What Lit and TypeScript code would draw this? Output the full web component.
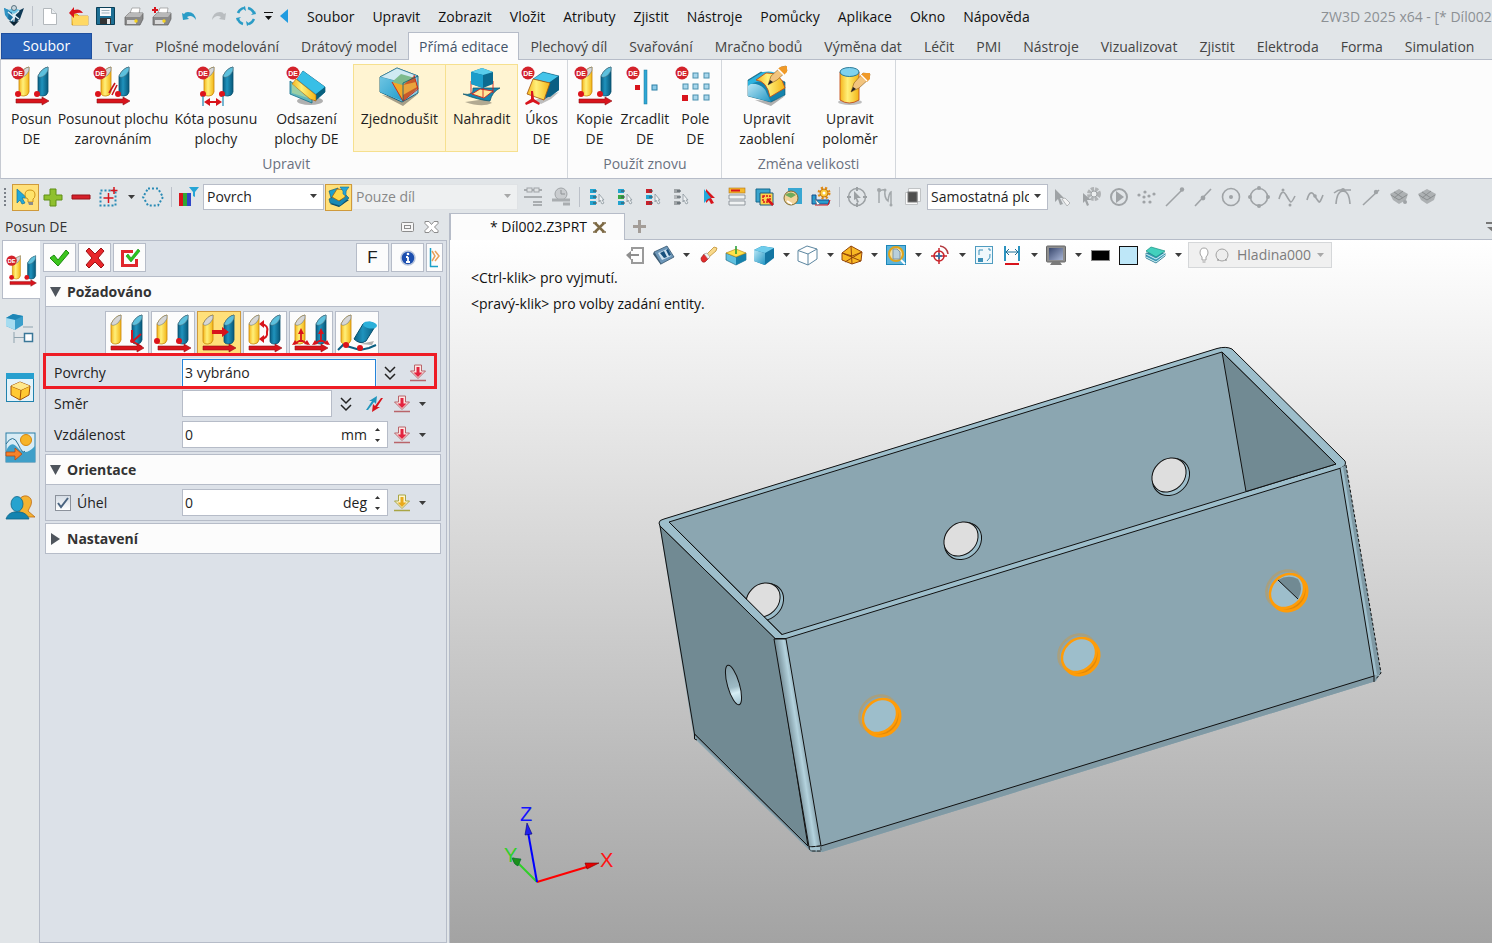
import { LitElement, html, svg, css } from "lit";
import { customElement, state } from "lit/decorators.js";
import { classMap } from "lit/directives/class-map.js";

type Frag = unknown;

const box = (w: number, h: number, body: Frag) =>
  html`<svg class="ic" width=${w} height=${h} viewBox="0 0 ${w} ${h}" aria-hidden="true">${body}</svg>`;
const i24 = (body: Frag) => box(24, 24, body);

/* ---------- shared drawing parts ---------- */

const pillar = (x: number, y: number, tone: string, cap = "") => svg`
  <g transform="translate(${x} ${y})">
    <path d="M0 9Q4 1 10 0V25Q9 29 5 29Q0 29 0 26Z" fill="url(#${tone})" stroke=${tone === "gold" ? "#c8860a" : "#07506e"} stroke-width=".8"/>
    <path d="M0 9Q4 1 10 0Q11 4 7 8Q2 12 0 9Z" fill=${cap || (tone === "gold" ? "#d6d6d6" : "#5cc0dd")} stroke="#5a6a72" stroke-width=".5"/>
  </g>`;
const baseArrow = (x: number, y: number) =>
  svg`<path d="M${x} ${y - 2}h26v-2l7 4l-7 4v-2h-26z" fill="#d8141c" stroke="#8e1015" stroke-width=".6"/>`;
const dot = (x: number, y: number, r = 3) => svg`<circle cx=${x} cy=${y} r=${r} fill="#dc141c"/>`;
const badge = (x = 7, y = 7) => svg`
  <circle cx=${x} cy=${y} r="6.500" fill="#d3222a"/>
  <text x=${x} y=${y + 3} class="de" text-anchor="middle">DE</text>`;

const posun = svg`${pillar(8, 1, "gold")}${pillar(27, 1, "blue")}${dot(7, 28)}${dot(26, 28)}${baseArrow(5, 35)}${badge()}`;

const ribbonIcons: Record<string, Frag> = {
  posun,
  zarovnani: svg`${pillar(8, 1, "gold")}${pillar(26, 1, "blue")}${dot(5, 28)}${dot(25, 28)}
    <path d="M16 27l6-10M19 29l5-10" stroke="#c4161d" stroke-width="1.600"/>${baseArrow(4, 35)}${badge()}`,
  kota: svg`${pillar(8, 1, "gold")}${pillar(27, 1, "blue")}${dot(7, 28)}${dot(26, 28)}
    <path d="M7 30v10M27 30v10" stroke="#1d87b4" stroke-width="1.200"/>
    <path d="M8 36l6-4v3h6v-3l6 4l-6 4v-3h-6v3z" fill="#d8141c"/>${badge()}`,
  odsazeni: svg`
    <ellipse cx="24" cy="35" rx="13" ry="4" fill="#000" opacity=".3"/>
    <path d="M4 15L26 31V37L4 28Z" fill="#63b6bb" stroke="#0d6d8c" stroke-width=".8"/>
    <path d="M17 5L39 21V26L29 35L26 31L10 15Z" fill="#1c9cc7" stroke="#07506e" stroke-width=".7"/>
    <path d="M17 5L39 21L30 28L11 13Z" fill="#38bfe6"/>
    <path d="M30 28L39 21V26L30 34Z" fill="#08617f"/>
    <path d="M10 13L30 29V35L24 33L6 18Z" fill="url(#gold)" stroke="#b3600a" stroke-width=".6"/>
    <path d="M6 18v9l16 5z" fill="#a9d6a0" opacity=".8"/>${badge(7, 7)}`,
  zjednodusit: svg`
    <path d="M3 29L24 40L39 28L24 33Z" fill="#000" opacity=".35"/>
    <path d="M1 11L18 2L39 10V27L23 36L1 26Z" fill="#8ecbe0" stroke="#0d5a78" stroke-width=".9"/>
    <path d="M1 11L18 2L39 10L24 17Z" fill="#cfeaf3" stroke="#1d6f8e" stroke-width=".6"/>
    <path d="M1 11L24 17V35L1 26Z" fill="#23a3d0"/>
    <path d="M1 11L24 17V35L1 26Z" fill="url(#ice)" opacity=".5"/>
    <path d="M13 16L22 8L36 12L24 19Z" fill="#7dbb8d"/>
    <path d="M13 16L24 19V35Z" fill="#f2a928"/>
    <path d="M24 19L35 10L39 22L24 35Z" fill="#c85a2a"/>
    <path d="M24 19L37 16L38 21L24 29Z" fill="#e9a33c"/>
    <path d="M13 16L24 35L39 23L35 9" fill="none" stroke="#cc2b1d" stroke-width="1"/>
    <path d="M24 17V35M24 17L39 10" stroke="#0d5a78" stroke-width=".8"/>`,
  nahradit: svg`
    <path d="M3 36Q20 42 30 37L24 33Z" fill="#000" opacity=".3"/>
    <path d="M1 28Q12 30 11 22H28L38 22Q30 26 28 35Q16 34 1 28Z" fill="#1685ad" stroke="#075067" stroke-width=".7"/>
    <path d="M10 28L18 23L31 25L22 32Z" fill="#ffe79a" stroke="#d0211c" stroke-width=".9"/>
    <path d="M9 15V28M31 15V27M21 18V31" stroke="#d0211c" stroke-width=".9"/>
    <path d="M9 6L20 2L31 6V18L21 22L9 18Z" fill="#0b6b90"/>
    <path d="M9 6L20 2L31 6L21 9Z" fill="#58cdec"/>
    <path d="M9 6L21 9V22L9 18Z" fill="#1a9dca"/>`,
  ukos: svg`
    <path d="M14 34L38 26L30 33L20 38Z" fill="#000" opacity=".25"/>
    <path d="M12 14L22 6L38 10V24L29 31L14 30Z" fill="#0d6d94"/>
    <path d="M12 13L22 6L38 10L28 17Z" fill="#43c4ea" stroke="#07506e" stroke-width=".5"/>
    <path d="M28 17L38 10V24L24 33Z" fill="#0b5f83"/>
    <path d="M12 13L29 17L23 34L6 28Z" fill="url(#gold)" stroke="#a2520b" stroke-width=".8"/>
    <path d="M10 25h2l1 8l6 4l-1 2l-6-3l-7 3l-1-2l6-4z" fill="#d8141c"/>${badge(7, 7)}`,
  zrcadlit: svg`
    <rect x="19" y="4" width="3" height="34" fill="#2fa7d4" stroke="#17779c" stroke-width=".5"/>
    <rect x="10" y="19" width="5" height="5" fill="#d8141c"/>
    <rect x="27" y="19" width="5" height="5" fill="#8ccbe8" stroke="#2a7fa5"/>${badge(8, 7)}`,
  pole: svg`
    ${[18, 29].map((x) => svg`<rect x=${x} y="7" width="5" height="5" fill="#a9d7ec" stroke="#4a8fae"/>`)}
    ${[8, 18, 29].map((x) => svg`<rect x=${x} y="18" width="5" height="5" fill="#a9d7ec" stroke="#4a8fae"/>`)}
    <rect x="7" y="29" width="6" height="6" fill="#d8141c"/>
    ${[18, 29].map((x) => svg`<rect x=${x} y="29" width="5" height="5" fill="#a9d7ec" stroke="#4a8fae"/>`)}${badge(7, 7)}`,
  zaobleni: svg`
    <path d="M8 34L24 40L38 30L24 35Z" fill="#000" opacity=".3"/>
    <path d="M1 14L14 6L38 16V29L24 36L1 30Z" fill="#1583ad" stroke="#075067" stroke-width=".6"/>
    <path d="M1 18Q16 16 20 28L24 36L1 30Z" fill="url(#ice)"/>
    <path d="M1 15L16 6Q26 4 32 9L20 16Q8 14 1 20Z" fill="#2db3de"/>
    <path d="M9 14L19 7Q34 6 38 22L23 31Q20 15 9 14Z" fill="url(#gold)" stroke="#c4501a" stroke-width=".9"/>
    <path d="M21 19L24 10L34 1L39 0L40 5L30 14Z" fill="#f2c47e" stroke="#8a5a1b" stroke-width=".6"/>
    <path d="M33 1L40 0V6L37 9L31 3Z" fill="#f09a28"/>
    <path d="M21 19L23 14L26 16Z" fill="#222"/><path d="M31 3L37 9" stroke="#fff" stroke-width="1.500"/>`,
  polomer: svg`
    <ellipse cx="20" cy="36" rx="12" ry="3" fill="#000" opacity=".25"/>
    <path d="M10 6V34Q19 40 29 34V6Z" fill="url(#gold)" stroke="#c4501a" stroke-width=".9"/>
    <ellipse cx="19.500" cy="6" rx="9.500" ry="4.500" fill="#7fd2ee" stroke="#1d6f8e" stroke-width=".9"/>
    <path d="M21 26L24 17L33 7L40 8L39 13L29 22Z" fill="#f2c47e" stroke="#8a5a1b" stroke-width=".6"/>
    <path d="M33 7L40 7V13L37 16L30 10Z" fill="#f09a28"/>
    <path d="M21 26L23 21L26 23Z" fill="#222"/><path d="M31 9L37 15" stroke="#fff" stroke-width="1.500"/>`,
};
ribbonIcons.kopie = posun;

const modeIcons: Frag[] = [
  svg`${pillar(5, 3, "gold")}${pillar(26, 3, "blue")}<path d="M26 18v12M26 30l9-8M26 29l10 6" fill="none" stroke="#d8141c" stroke-width="2"/>${dot(26, 29, 2)}${baseArrow(5, 36)}`,
  svg`${pillar(5, 3, "gold")}${pillar(26, 3, "blue")}${dot(5, 29)}${dot(27, 29)}${baseArrow(6, 36)}`,
  svg`${pillar(5, 3, "gold")}${pillar(26, 3, "blue")}<path d="M14 18h10v-3l7 5l-7 5v-3h-10z" fill="#d8141c"/>${baseArrow(5, 36)}`,
  svg`${pillar(5, 3, "gold")}${pillar(26, 3, "blue")}<path d="M17 12Q25 13 23 20Q24 26 17 27" fill="none" stroke="#d8141c" stroke-width="2"/><path d="M15 12l5-4v8zM15 27l5-4v8z" fill="#d8141c"/>${baseArrow(5, 36)}`,
  svg`${pillar(5, 3, "gold")}${pillar(26, 3, "blue")}
    <path d="M11 20v8l-7 4M11 28l7 4M31 20v8l-7 4M31 28l7 4" fill="none" stroke="#d8141c" stroke-width="1.800"/>
    <path d="M11 16l3 6h-6zM31 16l3 6h-6zM2 33l3-5l3 4zM20 33l-3-5l-3 4zM22 33l3-5l3 4zM40 33l-3-5l-3 4z" fill="#d8141c"/>${baseArrow(5, 36)}`,
  svg`${pillar(5, 3, "gold")}<path d="M24 32l12 1l2-4z" fill="#000" opacity=".3"/>
    <path d="M18 27L27 12Q34 8 40 13L30 29Q24 33 18 27Z" fill="url(#blue)" stroke="#07506e"/><ellipse cx="34" cy="13" rx="7" ry="3.500" fill="#2bb0da" transform="rotate(8 34 13)"/>
    <path d="M2 38L7 33L24 38L33 36L40 33" fill="none" stroke="#0b5f83" stroke-width="2"/>${dot(10, 33)}${dot(24, 36)}`,
];

/* ---------- quick access ---------- */

const printer = svg`
  <path d="M8 9L10 4h8l-1 6z" fill="#fff" stroke="#8f8f8f" stroke-width=".7"/>
  <path d="M3 13l4-4h14v6l-3 6H3z" fill="#8a8a8a" stroke="#5a5a5a" stroke-width=".7"/>
  <path d="M3 13l4-4h14l-3 4z" fill="#b9b9b9"/><path d="M5 16h9v4H5z" fill="#dadada"/><circle cx="14" cy="17" r="1.700" fill="#f6d21c"/>`;

const quickIcons: [string, Frag][] = [
  ["Nový", svg`<path d="M5.500 4.500h8l5 5V20.500H5.500z" fill="#fff" stroke="#b3b8bc"/><path d="M13.500 4.500v5h5" fill="#e9edf0" stroke="#b3b8bc"/>`],
  ["Otevřít", svg`<path d="M6 10h5l2 2h9v9H6z" fill="#f3bd31" stroke="#c98d0e" stroke-width=".7"/><path d="M6 12h16v9H7z" fill="#ffd964"/><path d="M3 9l5-6v3q6-2 9 3q-5-1-9 1v4z" fill="#d8141c"/>`],
  ["Uložit", svg`<path d="M2.500 3.500h18v17h-18z" fill="#1d6f94" stroke="#0b3f57"/><rect x="6" y="4" width="11" height="8" fill="#f6f8fa"/><path d="M7.500 6.500h8M7.500 9h8" stroke="#9fb1bb"/><rect x="6" y="14" width="11" height="6" fill="#333"/><rect x="13" y="15" width="3" height="5" fill="#e6e6e6"/>`],
  ["Tisk", printer],
  ["Náhled tisku", svg`${printer}<path d="M5 3v6M2 6h6" stroke="#d8141c" stroke-width="2"/>`],
  ["Zpět", svg`<path d="M4 9l1 7l6-1l-2-2q5-3 9 3q-1-8-8-8q-3 0-4 2z" fill="#2a9cc6"/>`],
  ["Znovu", svg`<path d="M20 9l-1 7l-6-1l2-2q-5-3-9 3q1-8 8-8q3 0 4 2z" fill="#b9bdc0"/>`],
  ["Obnovit", svg`<g fill="none" stroke="#2a9cc6" stroke-width="2.500"><path d="M14 4q4 1 6 5M20 15q-2 4-5 5M9 20q-4-1-5-5M4 9q1-3 5-5"/></g><g fill="#2a9cc6"><path d="M11 2l1 5l-4-3zM22 10l-5 1l4-4zM13 22l-1-5l4 3zM2 14l5-1l-4 4z"/></g>`],
];
const logo = svg`
  <path d="M2 4l8 4l2 12l-6-5z" fill="#1c6f9c"/><path d="M22 4l-8 4l-2 12l6-5z" fill="#0f3a56"/>
  <path d="M6 6l6-2l6 2l-6 4z" fill="#6cc6e6"/><path d="M2 4l5 2l-1 9l-3-4z" fill="#2f93c4"/>
  <path d="M6 8l5 4l6-5M9 17l4-5l4 3" fill="none" stroke="#dff1f8" stroke-width="1.500"/>
  <circle cx="12" cy="4" r="2.500" fill="#c9d8df" stroke="#294656" stroke-width=".7"/><path d="M7 17l5 5l5-5l-5 1z" fill="#0b2534"/>`;

/* ---------- selection toolbar ---------- */

const listPick = (c: string, a: string) => svg`
  <rect x="5" y="4" width="6" height="4" fill=${c}/><rect x="5" y="10" width="6" height="4" fill=${a}/><rect x="5" y="16" width="6" height="4" fill=${c}/>
  <path d="M8 6h4M8 12h4M8 18h4" stroke="#3f4b52" stroke-width="1"/>
  <path d="M14 9l5 6h-2l2 3l-2 1l-2-4l-1 2z" fill="#eef1f3" stroke="#8d989e" stroke-width=".8"/>`;
const greyBar = svg`<path d="M3 5h18M3 12h18M12 17h9M12 20h9" stroke="#a9adb0" stroke-width="2"/><rect x="6" y="3" width="5" height="4" fill="#dfe2e4" stroke="#a0a4a7"/><rect x="13" y="3" width="5" height="4" fill="#dfe2e4" stroke="#a0a4a7"/>`;

const T: Record<string, Frag> = {
  pick: svg`<path d="M3 4l10 9h-5l3 5l-3 1l-2-4l-3 3z" fill="#22a9da" stroke="#12749b" stroke-width=".7"/><path d="M16 5q5 0 5 5q0 3-2 4v3h-5v-3q-3-1-3-4q0-5 5-5z" fill="#ffe36a" stroke="#c98d0e" stroke-width=".9"/><path d="M14 17h5v3h-4z" fill="#8b8b8b"/>`,
  plus: svg`<path d="M9 4h6v6h6v5h-6v6H9v-6H3v-5h6z" fill="#8fc02e" stroke="#5f8f17"/>`,
  minus: svg`<path d="M3 10h18v4H3z" fill="#d6202a" stroke="#981219"/>`,
  frame: svg`<path d="M3.500 5.500h15v15h-15z" fill="none" stroke="#2a8bb5" stroke-width="2" stroke-dasharray="2 2"/><path d="M11.500 8v10M6.500 13h10M17 2v7M13.500 5.500h7" stroke="#d8141c" stroke-width="1.500"/>`,
  hex: svg`<path d="M7 3.500h10l5 8.500l-5 8.500H7L2 12z" fill="none" stroke="#2a8bb5" stroke-width="2" stroke-dasharray="2 2"/>`,
  filter: svg`<rect x="2" y="8" width="4" height="13" fill="#d8141c"/><rect x="6" y="8" width="4" height="13" fill="#30a833"/><rect x="10" y="8" width="4" height="13" fill="#3046c8"/><path d="M12 2h10l-4 5v5l-2-1V7z" fill="#26a5d6"/>`,
  face: svg`<path d="M3 19l9 3l10-7l-8-2z" fill="#0c4a64"/>
    <path d="M2 6l9-3v5l-7 5z" fill="#1f9fcb" stroke="#0c5675" stroke-width=".6"/>
    <path d="M2 14l4-2l7 4l6-6l3 3l-9 8l-10-3z" fill="#1a8ab4" stroke="#0c5675" stroke-width=".6"/>
    <path d="M5 12l5-8l9 1l-1 7l-6 4z" fill="#ffd84a" stroke="#a2620b" stroke-width=".8"/>
    <path d="M13 2h9l-3 4v5l-3-2V6z" fill="#26a5d6" stroke="#11749c" stroke-width=".6"/>`,
  ref1: greyBar,
  ref2: svg`<circle cx="12" cy="9" r="6" fill="#c9cccf" stroke="#a0a4a7"/><path d="M12 9V5M12 9h4" stroke="#8f9396"/><path d="M3 15h18M14 19h7" stroke="#a9adb0" stroke-width="3"/>`,
  l1: listPick("#22a3cf", "#22a3cf"), l2: listPick("#22a3cf", "#39a845"), l3: listPick("#c8202a", "#22a3cf"), l4: listPick("#9ea3a6", "#b4b8bb"),
  arrow2: svg`<path d="M9 4l9 9h-4l3 5l-3 1l-2-4l-3 3z" fill="#d8141c"/><path d="M7 4l7 9l-3 1l-4 4z" fill="#22a9da"/>`,
  rows: svg`<path d="M4 10h16v4H4zM4 16h16v4H4z" fill="#f1f3f4" stroke="#7d878d" stroke-width=".8"/><rect x="4" y="3" width="16" height="5" fill="#f5b82a" stroke="#b0741b" stroke-width=".6"/><path d="M6 5.500h9" stroke="#d8141c" stroke-width="2"/>`,
  layers: svg`<path d="M3 4h14v13H3z" fill="#3aa4cd" stroke="#14688d"/><path d="M7 8h13v12H7z" fill="#fbd34c" stroke="#1a5f80"/><path d="M10 11h7v6h-7z" fill="none" stroke="#d8141c" stroke-width="1.500" stroke-dasharray="2 1"/><path d="M14 14l6 6" stroke="#d8141c" stroke-width="2.500"/>`,
  globe: svg`<path d="M7 3h14v16H7z" fill="#38a7d2"/><circle cx="10" cy="13" r="7" fill="#f2d39a" stroke="#7e6a2d"/><path d="M4 10q6-5 11 0l-5 3z" fill="#6fab5a"/><path d="M6 16l5 3" stroke="#fff" stroke-width="2"/>`,
  plate: svg`<circle cx="15" cy="8" r="5" fill="none" stroke="#e08a14" stroke-width="3" stroke-dasharray="2 2"/><circle cx="15" cy="8" r="4" fill="#fbcb3a" stroke="#c97812"/><circle cx="15" cy="8" r="1.500" fill="#fff"/><path d="M3 10h4v5h13v4H3z" fill="#2a9ccd" stroke="#164f8c"/><path d="M6 20h13l2-5" fill="none" stroke="#d8141c" stroke-width="1"/><path d="M6 14l5 5l-3 1z" fill="#fff" stroke="#567" stroke-width=".6"/>`,
  target: svg`<circle cx="12" cy="12" r="8.500" fill="none" stroke="#9ba0a3" stroke-width="1.500"/><path d="M12 2v4M12 18v4M2 12h4M18 12h4" stroke="#9ba0a3" stroke-width="2"/><path d="M9 6l7 7h-4l2 4l-2 1l-1-4l-2 1z" fill="#9ba0a3"/>`,
  links: svg`<path d="M6 18V7q2-3 6-2Q11 13 15 16Q16 8 18 7v12" fill="none" stroke="#a3a8ab" stroke-width="1.500"/><circle cx="6" cy="5" r="2" fill="#a3a8ab"/><circle cx="12" cy="5" r="1.500" fill="#a3a8ab"/><circle cx="18" cy="20" r="1.500" fill="#a3a8ab"/>`,
  square: svg`<path d="M7.500 3.500h12v13h-12zM4.500 7.500h12v12h-12z" fill="#fafafa" stroke="#c0c3c5"/><rect x="7" y="7" width="9" height="10" fill="#4e4e4e" stroke="#777"/>`,
};
const g = "#9fa3a6";
const grey: Frag[] = [
  svg`<path d="M4 4l9 9h-4l3 6l-3 1l-2-6l-3 3z" fill=${g}/><path d="M11 14l3-1l5 5l-3 3z" fill="#f3f3f3" stroke="#b5b8ba"/>`,
  svg`<circle cx="15" cy="9" r="5" fill="none" stroke="#b0b3b5" stroke-width="4" stroke-dasharray="3 1"/><circle cx="15" cy="9" r="3" fill="#eceeef" stroke=${g}/><path d="M4 8l8 7h-4l2 5l-2 1l-2-5l-2 2z" fill=${g}/>`,
  svg`<circle cx="12" cy="12" r="8" fill="none" stroke=${g} stroke-width="2"/><path d="M9 6l8 6l-8 6z" fill=${g}/>`,
  svg`${[[4, 10], [10, 7], [19, 9], [14, 11], [9, 12], [9, 17], [15, 17]].map(([x, y]) => svg`<circle cx=${x} cy=${y} r="1.600" fill=${g}/>`)}`,
  svg`<path d="M3 21L19 5" stroke=${g} stroke-width="1.600"/><circle cx="19" cy="4.500" r="2.200" fill=${g}/>`,
  svg`<path d="M4 21L20 4" stroke=${g} stroke-width="1.600"/><circle cx="12" cy="13" r="2.400" fill=${g}/>`,
  svg`<circle cx="12" cy="12" r="8.500" fill="none" stroke=${g} stroke-width="1.600"/><circle cx="12" cy="12" r="2" fill=${g}/>`,
  svg`<circle cx="12" cy="12" r="8.500" fill="none" stroke=${g} stroke-width="1.600"/>${[[12, 3], [12, 21], [3, 12], [21, 12]].map(([x, y]) => svg`<circle cx=${x} cy=${y} r="2" fill=${g}/>`)}`,
  svg`<path d="M4 14Q7 3 11 10T16 17T20 11" fill="none" stroke=${g} stroke-width="1.600"/><circle cx="8" cy="5" r="1.500" fill=${g}/><circle cx="15" cy="20" r="1.500" fill=${g}/>`,
  svg`<path d="M4 15Q7 4 11 10T16 17T20 10" fill="none" stroke=${g} stroke-width="1.600"/><circle cx="12" cy="11" r="1.800" fill=${g}/>`,
  svg`<path d="M3 8Q8 4 12 5H20M5 19Q6 6 12 6T19 19" fill="none" stroke=${g} stroke-width="1.600"/><circle cx="12" cy="5" r="2" fill=${g}/>`,
  svg`<path d="M4 20L20 5" stroke=${g} stroke-width="1.600"/><circle cx="17" cy="7" r="2.200" fill=${g}/>`,
  svg`<path d="M3 9l9-5l9 5l-2 6l-7 4l-6-4z" fill="#adb1b3"/><path d="M4 10l8 5l8-5M7 7l9 6M16 6l-9 7" stroke="#8b8f91" fill="none"/><circle cx="18" cy="17" r="2" fill=${g}/>`,
  svg`<path d="M3 9l9-5l9 5l-2 6l-7 4l-6-4z" fill="#adb1b3"/><path d="M4 10l8 5l8-5M7 7l9 6M16 6l-9 7" stroke="#8b8f91" fill="none"/>`,
];

/* ---------- view toolbar ---------- */

const V: Record<string, Frag> = {
  exit: svg`<path d="M8 8V5h11v15H8v-4" fill="none" stroke="#9a9a9a" stroke-width="2"/><path d="M2 12l5-4v3h8v2H7v4z" fill="#8e8e8e"/>`,
  view: svg`<path d="M2 9l13-6l7 11l-13 7z" fill="#6c96b8" stroke="#35566f" stroke-width=".8"/><path d="M2 9l-1 2l8 11v-1z" fill="#35566f"/><path d="M6 10l9-4l4 7l-9 4z" fill="#cfe3f1"/><path d="M8 10l4-2l3 6l-3 1zM14 7l2-1l3 6l-2 1z" fill="#17507c"/>`,
  eraser: svg`<path d="M11 11L18 4l3 1l-1 3l-7 6z" fill="#f8d98b" stroke="#b88420" stroke-width=".7"/><path d="M5 15l3-4l5 4l-4 4q-4 1-4-4z" fill="#e22b2b" stroke="#8c1818" stroke-width=".6"/><path d="M8 11l3-1l3 4l-2 2z" fill="#f3f3f3" stroke="#888" stroke-width=".5"/>`,
  datum: svg`<path d="M2 10l10 4l10-4v7l-10 5l-10-5z" fill="#5fc0df" stroke="#0d5a78" stroke-width=".6"/><path d="M12 14l10-4v7l-10 5z" fill="#1681ab"/><path d="M2 10l10-4l10 4l-10 4z" fill="#ffe14a" stroke="#b27c0b" stroke-width=".6"/><path d="M12 3v8" stroke="#1e9b33" stroke-width="1.500"/>`,
  shade: svg`<path d="M2 7l8-4l12 2v10l-9 7l-11-4z" fill="#1376a3"/><path d="M2 7l8-4l12 2l-9 5z" fill="#6fcdec"/><path d="M2 7l11 3v12l-11-4z" fill="url(#ice)"/>`,
  wire: svg`<path d="M2 7.500l9-4.500l10 3v10l-9 6l-10-4zM2 7.500l10 3.500l9-5M12 11v11" fill="#fff" stroke="#5c86a0" stroke-width="1"/>`,
  mesh: svg`<path d="M2 10l9-7l11 6l-1 9l-9 3l-10-4z" fill="#f9b824" stroke="#93460c"/><path d="M2 10l19 8M11 3l1 18M22 9L5 19M2 10l10 3l10-4" stroke="#93460c" fill="none"/>`,
  zoomdoc: svg`<rect x="2.500" y="2.500" width="19" height="19" fill="#5db4dc" stroke="#1c86b8"/><circle cx="12" cy="11" r="7" fill="#f3dfa0" stroke="#e0a41c" stroke-width="2"/><path d="M9 6h4l3 3v7H9z" fill="#b9cfdb" stroke="#7f95a3"/><path d="M17 17l4 4" stroke="#fff" stroke-width="2"/>`,
  cross: svg`<circle cx="11" cy="13" r="5" fill="none" stroke="#c9252c" stroke-width="1.500"/><path d="M11 5v16M3 13h16" stroke="#c9252c" stroke-width="1.500"/><path d="M11 10v6M8 13h6" stroke="#2276b0" stroke-width="1.500"/><path d="M12 3q7 1 8 8" fill="none" stroke="#b33a3f" stroke-width="1.500"/>`,
  fit: svg`<rect x="3.500" y="3.500" width="17" height="17" fill="#f0f8fc" stroke="#4f9cc0"/><path d="M6 15h5v4H6z" fill="#3c8fb7"/><path d="M16 6h2v2M15 18q4-3 3-7M7 12V7h4" fill="none" stroke="#3c8fb7"/>`,
  dim: svg`<path d="M5 3v15M19 3v15" stroke="#2c93c0" stroke-width="2"/><path d="M6 9h12M6 9l3-3M6 9l3 3M18 9l-3-3M18 9l-3 3" stroke="#1b6e96" fill="none"/><path d="M5 21h14" stroke="#d8141c" stroke-width="2"/>`,
  monitor: svg`<rect x="2.500" y="3" width="19" height="16" rx="1" fill="#8e8e8e" stroke="#666"/><rect x="5" y="5" width="14" height="12" fill="url(#screen)"/><path d="M8 19h8l2 3H6z" fill="#7b7b7b"/>`,
  black: svg`<rect x="3.500" y="7.500" width="18" height="10" fill="#000" stroke="#888"/>`,
  lightblue: svg`<rect x="3.500" y="3.500" width="18" height="18" fill="#bee7f8" stroke="#111"/>`,
  stack: svg`<path d="M2 15l10 5l9-7v-3H2z" fill="#3a99b5" stroke="#1d6a82" stroke-width=".7"/><path d="M2 11l10 5l9-6M2 14l10 5l9-7" stroke="#d7f2f5" fill="none"/><path d="M2 8l5-4l14 4l-9 6z" fill="#43d0bd" stroke="#178f80" stroke-width=".7"/>`,
};

const caret = svg`<path d="M0 0h7l-3.500 4z" fill="#3c3c3c"/>`;
const chevrons = svg`<path d="M1 1l5 5l5-5M1 8l5 5l5-5" fill="none" stroke="#222" stroke-width="1.500"/>`;
const download = (c: string, d: string, f: string) => svg`
  <path d="M5.500 1h7v6h4l-7.500 7.500L1.500 7h4z" fill=${f} stroke=${c}/><path d="M7.500 3h3v5.500h3l-4.500 4.500l-4.500-4.500h3z" fill=${d}/><path d="M1 16.500h16" stroke=${c} stroke-width="1.500"/>`;
const redDown = download("#b9646a", "#e3233f", "#fbe6e3");
const goldDown = download("#a9a545", "#e8aa1c", "#fdf6cf");

const sideIcons: [string, Frag][] = [
  ["Posun DE", svg`<g transform="translate(0 2) scale(.8)">${posun}</g>`],
  ["Správce historie", svg`<path d="M1 6l7-4l10 2v9l-8 5l-9-4z" fill="#3a9fcb"/><path d="M1 6l7-4l10 2l-8 4z" fill="#1e86b6"/><path d="M1 6l9 2v10l-9-4z" fill="#a5dcf0"/><path d="M18 15h10M9 20v11M9 25.500h10" stroke="#8fa3ae"/><rect x="19.500" y="21.500" width="8" height="8" fill="#fff" stroke="#3a7798" stroke-width="1.500"/>`],
  ["Správce zobrazení", svg`<rect x="1.500" y="2.500" width="27" height="28" fill="#e4f3fa" stroke="#2182ad"/><rect x="1" y="2" width="28" height="6" fill="#28a0cf"/><path d="M6 15l9-4l10 4l-1 9l-9 5l-9-5z" fill="#ffc933" stroke="#a2520b"/><path d="M6 15l10 4l9-4M16 19l-1 10" fill="none" stroke="#a2520b"/><path d="M6 15l9-4l10 4l-9 4z" fill="#ffe88c"/>`],
  ["Vizuální správce", svg`<rect x="1" y="3" width="29" height="29" fill="#d8ecf5" stroke="#2b7ea6"/><path d="M1 21Q6 9 13 18T30 16V32H1Z" fill="#3f9fc8"/><path d="M1 14Q8 3 13 14T20 21" fill="none" stroke="#276f93"/><circle cx="21" cy="10" r="5.500" fill="#f6b428" stroke="#d5860e"/><path d="M1 22h9v-4l7 6l-7 6v-4H1z" fill="#f5822a" stroke="#b2440c" stroke-width=".7"/>`],
  ["Správce rolí", svg`<path d="M14 12q2-6 8-5q6 2 4 9q-2 4-3 6l7 6H14z" fill="#f4b331" stroke="#bf6a10" stroke-width=".8"/><ellipse cx="12" cy="15" rx="6" ry="7.500" fill="#26a3cf" stroke="#0d6488" stroke-width=".8"/><path d="M1 30q2-6 8-7h6q7 1 9 7z" fill="#1484b0" stroke="#0d6488" stroke-width=".8"/>`],
];

const menuItems = ["Soubor", "Upravit", "Zobrazit", "Vložit", "Atributy", "Zjistit", "Nástroje", "Pomůcky", "Aplikace", "Okno", "Nápověda"];
const tabs = ["Tvar", "Plošné modelování", "Drátový model", "Přímá editace", "Plechový díl", "Svařování", "Mračno bodů", "Výměna dat", "Léčit", "PMI", "Nástroje", "Vizualizovat", "Zjistit", "Elektroda", "Forma", "Simulation"];

interface Cmd { icon: string; lines: string[]; size?: string; hot?: boolean }
const groups: { label: string; cmds: Cmd[] }[] = [
  { label: "Upravit", cmds: [
    { icon: "posun", lines: ["Posun", "DE"] },
    { icon: "zarovnani", lines: ["Posunout plochu", "zarovnáním"] },
    { icon: "kota", lines: ["Kóta posunu", "plochy"] },
    { icon: "odsazeni", lines: ["Odsazení", "plochy DE"], size: "wide" },
    { icon: "zjednodusit", lines: ["Zjednodušit"], size: "mid", hot: true },
    { icon: "nahradit", lines: ["Nahradit"], size: "mid", hot: true },
    { icon: "ukos", lines: ["Úkos", "DE"] },
  ] },
  { label: "Použít znovu", cmds: [
    { icon: "kopie", lines: ["Kopie", "DE"] },
    { icon: "zrcadlit", lines: ["Zrcadlit", "DE"] },
    { icon: "pole", lines: ["Pole", "DE"] },
  ] },
  { label: "Změna velikosti", cmds: [
    { icon: "zaobleni", lines: ["Upravit", "zaoblení"], size: "wide" },
    { icon: "polomer", lines: ["Upravit", "poloměr"], size: "wide" },
  ] },
];

@customElement("app-root")
export class AppRoot extends LitElement {
  @state() private mode = 2;
  @state() private angle = true;

  static styles = css`
    :host { display: flex; flex-direction: column; height: 100vh; min-width: 0; overflow: hidden;
      background: #e1e5e8; color: #1e1e1e; font: 14px/20px "Open Sans", "Noto Sans", sans-serif; }
    * { box-sizing: border-box; }
    button, input, select { font: inherit; color: inherit; margin: 0; padding: 0; border: 0; background: none; border-radius: 0; }
    a { color: inherit; text-decoration: none; }
    h2, h3, p { margin: 0; font: inherit; }
    .ic { display: block; flex: none; overflow: visible; }
    .defs { position: absolute; width: 0; height: 0; }
    .de { font: bold 7px "Liberation Sans", sans-serif; fill: #fff; }
    .cell { flex: none; width: 28px; height: 28px; display: grid; place-items: center; }
    .drop { flex: none; width: 16px; height: 28px; display: grid; place-items: center; }
    .sep { flex: none; width: 8px; height: 20px; display: grid; justify-items: center; }
    .sep::before { content: ""; width: 1px; height: 100%; background: #bcc1c9; }

    .titlebar { display: flex; align-items: center; height: 32px; flex: none; }
    .logo { width: 28px; height: 28px; display: grid; place-items: center; }
    .menu { display: flex; gap: 18px; padding: 2px 0 0 15px; white-space: nowrap; color: #111; }
    .apptitle { margin-left: auto; flex: none; width: 171px; white-space: nowrap; color: #8c9094; padding-top: 2px; }

    .tabs { display: flex; height: 28px; flex: none; border-bottom: 1px solid #b6bcc8; padding: 1px 0 0 1px; color: #444; }
    .tab { height: 26px; padding: 1px 11px 0; white-space: nowrap; flex: none; }
    .tab.file { width: 91px; margin-right: 2px; padding: 0; background: #2962b8; border: 1px solid #1f4f9e; color: #fff; }
    .tab.on { height: 28px; margin: -1px 0 0; padding-inline: 10px; border: 1px solid #b6bcc8; border-bottom: 0; background: #fcfcfc; color: #44546a; }

    .ribbon { display: flex; height: 119px; flex: none; background: #fcfcfc; border-bottom: 1px solid #b6bcc8; border-left: 1px solid #c6cad2; }
    .group { display: flex; flex-direction: column; padding: 4px 3px 0; border-right: 1px solid #d3d7dc; }
    .group:first-child { padding-left: 7px; }
    .cmds { display: flex; height: 88px; }
    .cmd { display: flex; flex-direction: column; align-items: center; gap: 3px; min-width: 46px; padding: 1px 2px 0; border: 1px solid transparent; line-height: 20px; white-space: nowrap; }
    .cmd.mid { padding-inline: 7px; }
    .cmd.wide { padding-inline: 13px; }
    .cmd.hot { background: #fff4d2; border-color: #f6e08f; }
    .cmd.hot + .hot { border-left: 0; }
    .caption { text-align: center; color: #6a7180; line-height: 20px; padding-top: 2px; }

    .tools { display: flex; align-items: center; height: 34px; flex: none; padding-top: 2px; }
    .grip { width: 12px; height: 20px; flex: none; background: radial-gradient(circle, #7a8088 1px, transparent 1px) 3px 0 / 4px 4px repeat-y; }
    .lit { width: 27px; height: 27px; flex: none; display: grid; place-items: center; background: #ffe07a; border: 1px solid #cf9a3c; }
    .combo { position: relative; flex: none; width: 121px; height: 26px; margin-right: 1px; }
    .combo select { appearance: none; width: 100%; height: 26px; padding: 0 24px 0 3px; background: #fff; border: 1px solid #b8bdc8; }
    .combo.narrow select { padding-right: 18px; }
    .combo svg { position: absolute; right: 7px; top: 10px; pointer-events: none; }
    .combo.off { width: 166px; }
    .combo.off select { background: #eef0f1; border-color: #dfe2e5; color: #888; opacity: 1; }
    .combo.off svg, .layer .ic.c { opacity: .4; }

    .main { flex: 1; min-height: 0; display: grid; grid-template-columns: 450px minmax(0, 1fr); }
    .left { display: flex; flex-direction: column; min-height: 0; border-right: 1px solid #b6bcc8; }
    .lefthead { display: flex; align-items: center; height: 27px; padding: 0 6px 0 5px; color: #333; flex: none; }
    .lefthead h2 { flex: 1; }
    .lefthead button { width: 24px; height: 24px; display: grid; place-items: center; }
    .leftbody { flex: 1; min-height: 0; display: flex; }
    .side { width: 38px; margin-left: 2px; flex: none; display: flex; flex-direction: column; border-right: 1px solid #b6bcc8; }
    .side button { height: 59px; flex: none; display: grid; place-items: center; }
    .side button.on { background: #fff; border: 1px solid #b6bcc8; border-right: 0; margin-right: -1px; }
    .panel { flex: 1; min-width: 0; margin-right: 2px; background: #dce1e8; border: 1px solid #b6bcc8; border-left: 0; padding: 2px 5px 0 3px; display: flex; flex-direction: column; gap: 2px; }
    .acts { display: flex; gap: 2px; margin: 0 -2px 2px 0; }
    .acts button { width: 33px; height: 29px; display: grid; place-items: center; background: #fcfcfc; border: 1px solid #b6bcc8; font-family: "Liberation Sans", sans-serif; font-size: 17px; }
    .acts button.thin { width: 17px; }
    .acts .push { margin-left: auto; }
    .sect { margin-left: 2px; border: 1px solid #b6bcc8; }
    .sect h3 button { display: flex; align-items: center; gap: 6px; width: 100%; height: 29px; padding: 1px 0 0 4px; background: #fcfcfc; font-weight: 700; color: #333; text-align: left; }
    .fields { border-top: 1px solid #b6bcc8; }
    .modes { display: flex; gap: 2px; padding: 4px 0 0 59px; }
    .modes button { width: 44px; height: 43px; background: #fcfcfc; border: 1px solid #b6bcc8; border-bottom: 0; }
    .modes button.on { background: #ffe07a; border-color: #cf9a3c; }
    .rows { padding-top: 3px; padding-bottom: 1px; }
    .row { position: relative; display: flex; align-items: center; height: 31px; padding-left: 8px; }
    .row.tall { height: 35px; }
    .row > label { width: 128px; flex: none; color: #222; }
    .row > label.check { display: flex; align-items: center; gap: 6px; }
    .check input { appearance: none; width: 16px; height: 16px; margin-left: 1px; border: 1px solid #8c929c; background: #f2f4f7; }
    .check input:checked { background: linear-gradient(#d5dce5, #fff); }
    .check .tick { position: absolute; left: 11px; pointer-events: none; }
    .mark { position: absolute; left: -3px; right: 3px; top: -4px; bottom: -1px; border: 3px solid #ee1c25; pointer-events: none; }
    .field { width: 150px; height: 27px; padding: 0 2px; background: #fff; border: 1px solid #b6bcc8; outline: 0; flex: none; }
    .field.wide { width: 194px; height: 28px; border-color: #2484da; outline: 1px solid #e9eef5; }
    .num { display: flex; align-items: center; width: 206px; height: 27px; background: #fff; border: 1px solid #b6bcc8; flex: none; }
    .num input { flex: 1; min-width: 0; padding-left: 2px; outline: 0; }
    .spin { display: flex; flex-direction: column; gap: 4px; width: 20px; align-items: center; }
    .spin button { width: 9px; height: 7px; display: grid; place-items: center; }
    .mini { flex: none; width: 28px; height: 27px; display: grid; place-items: center; }
    .mini.slim { width: 12px; }

    .right { display: flex; flex-direction: column; min-width: 0; min-height: 0; }
    .docs { display: flex; height: 27px; flex: none; border-bottom: 1px solid #b6bcc8; align-items: flex-start; }
    .doc { display: flex; align-items: center; justify-content: flex-end; gap: 6px; width: 175px; height: 27px; padding-right: 18px; background: #fcfcfc; border: 1px solid #b6bcc8; border-bottom: 0; color: #111; }
    .add { width: 28px; height: 27px; display: grid; place-items: center; }
    .more { margin-left: auto; width: 6px; height: 27px; overflow: hidden; display: grid; align-items: center; }
    .canvas { position: relative; flex: 1; min-height: 0; background: linear-gradient(#ffffff, #a3a3a3); overflow: hidden; }
    .scene { position: absolute; inset: 0; width: 100%; height: 100%; }
    .axis { font: 20px "Liberation Sans", sans-serif; }
    .viewbar { position: relative; display: flex; justify-content: center; align-items: center; height: 30px; padding-left: 12px; }
    .layer { display: flex; align-items: center; gap: 4px; position: relative; width: 144px; height: 26px; margin-left: 2px; padding-left: 8px; border: 1px solid #d5d7d9; background: #f0f0f0; }
    .layer select { appearance: none; flex: 1; min-width: 0; color: #7d7d7d; opacity: 1; padding-left: 4px; }
    .layer .c { position: absolute; right: 7px; top: 10px; }
    .hints { position: relative; display: grid; gap: 10px; padding: 0 21px; color: #111; line-height: 16px; }
  `;

  private btn(label: string, art: Frag, cls = "cell") {
    return html`<button class=${cls} aria-label=${label} title=${label}>${i24(art)}</button>`;
  }
  private drop(label: string) {
    return html`<button class="drop" aria-label=${label}>${box(7, 4, caret)}</button>`;
  }

  private defs() {
    return html`<svg class="defs" aria-hidden="true"><defs>
      <linearGradient id="gold"><stop offset="0" stop-color="#f5b51c"/><stop offset=".4" stop-color="#fff07a"/><stop offset="1" stop-color="#f3b414"/></linearGradient>
      <linearGradient id="blue"><stop offset="0" stop-color="#0a5f84"/><stop offset=".4" stop-color="#1f93bd"/><stop offset="1" stop-color="#08587a"/></linearGradient>
      <linearGradient id="ice" x2="1" y2="1"><stop offset="0" stop-color="#b9e6f5"/><stop offset="1" stop-color="#2196c4"/></linearGradient>
      <linearGradient id="screen" x2="1" y2="1"><stop offset="0" stop-color="#39486e"/><stop offset="1" stop-color="#a9b6d6"/></linearGradient>
      <linearGradient id="bend" gradientUnits="userSpaceOnUse" x1="791" y1="741" x2="804" y2="739"><stop offset="0" stop-color="#7d96a0"/><stop offset=".6" stop-color="#b4d3de"/><stop offset="1" stop-color="#8ba6b1"/></linearGradient>
      <linearGradient id="slot" x1="0" y1="0" x2="0" y2="1"><stop offset="0" stop-color="#7f99a3"/><stop offset=".55" stop-color="#9dbac5"/><stop offset=".7" stop-color="#d6eef5"/><stop offset="1" stop-color="#9dbecb"/></linearGradient>
      <clipPath id="inside"><path d="M669 522L1222 352L1336 464L782 634.500Z"/></clipPath>
    </defs></svg>`;
  }

  private backHole(x: number, y: number) {
    return svg`<g stroke="#111">
      <ellipse cx=${x + 1} cy=${y} rx="20" ry="17" transform="rotate(-45 ${x + 1} ${y})" fill="#9dbecb"/>
      <ellipse cx=${x - 1} cy=${y - 2} rx="18.500" ry="15.500" transform="rotate(-45 ${x - 1} ${y - 2})" fill="#dedede"/></g>`;
  }
  private pickedHole(x: number, y: number, corner = false) {
    const r = (dx: number) => `rotate(-45 ${x + dx} ${y + dx})`;
    return svg`
      <ellipse cx=${x - 2} cy=${y - 2} rx="20" ry="17" transform=${r(-2)} fill="none" stroke="#c79a4c" stroke-width="2.500" opacity=".5"/>
      <ellipse cx=${x + 2} cy=${y + 2} rx="19" ry="17" transform=${r(2)} fill="#e08a0c" stroke="#ff9c08" stroke-width="3"/>
      <ellipse cx=${x} cy=${y} rx="18.500" ry="15.500" transform=${r(0)} fill="#9dbecb" stroke="#ff9c08" stroke-width="2.500"/>
      ${corner ? svg`<path d="M${x - 9} ${y - 11}Q${x + 1} ${y - 17} ${x + 11} ${y - 12}Q${x + 17} ${y - 3} ${x + 11} ${y + 8}Z" fill="#718a93"/><path d="M${x - 9} ${y - 11}L${x + 11} ${y + 8}" stroke="#111"/>` : ""}`;
  }

  private scene() {
    return html`<svg class="scene" viewBox="450 240 1042 703" preserveAspectRatio="xMinYMin meet" role="img" aria-label="Model Díl002">
      <path d="M659 523Q659 520 664 519L1217 348.500Q1226 346 1232 349L1345 461L1346 466L1381 673L1376 681L822 852H811L694 738Z" fill="#8ba6b1"/>
      <path d="M659 523Q659 520 664 519L1217 348.500Q1226 346 1232 349L1345 461Q1347 465 1341 468L786 638.500H775L660 526Z" fill="#9dbecb" stroke="#111"/>
      <path d="M669 522L1222 352L1336 464L782 634.500Z" fill="#8ba6b1" stroke="#111"/>
      <path d="M1222 352L1336 464L1246 491.500Z" fill="#718a93" stroke="#111"/>
      <g clip-path="url(#inside)">${this.backHole(764, 602)}</g>
      ${this.backHole(962, 541)}${this.backHole(1170, 477)}
      <path d="M669 522L782 634.500" stroke="#111"/>
      <path d="M660 526L775 638.500L808 846L694.500 734Z" fill="#718a93" stroke="#111"/>
      <path d="M694.500 734L808 846L812 852L697 739Z" fill="#7d96a1"/>
      <path d="M694.500 734L808 846M694.500 734V739L697 740" fill="none" stroke="#111"/>
      <path d="M774 639H786L821 846L809 847Z" fill="url(#bend)" stroke="#111"/>
      <path d="M809 847Q809 851 813 851H821V846Z" fill="#a5c4d0" stroke="#111" stroke-dasharray="4 1"/>
      <path d="M821 846L1374 676L1376 681L822 852Z" fill="#809aa5"/>
      <path d="M1340 468L1346 465L1381 673L1374 676Z" fill="#7f99a4"/>
      <path d="M1340 468L1343 467L1377 675H1374Z" fill="#9dbecb"/>
      <path d="M821 846L1374 676M1340 468L1374 676V682" fill="none" stroke="#111"/>
      <path d="M1346 465L1381 673L1375 680" fill="none" stroke="#111" stroke-dasharray="3 2"/>
      <ellipse cx="733.500" cy="685" rx="6" ry="20.500" transform="rotate(-16 733.500 685)" fill="url(#slot)" stroke="#111"/>
      ${this.pickedHole(880, 716)}${this.pickedHole(1079, 655)}${this.pickedHole(1287, 591, true)}
      <g stroke-width="2" fill="none">
        <path d="M537 882L513 858" stroke="#2fcf28"/><path d="M537 882L590 866" stroke="#f00"/><path d="M537 882L528 832" stroke="#00f"/>
      </g>
      <path d="M599 863L585 863L587 869Z" fill="#e60000" stroke="#700" stroke-width=".6"/>
      <path d="M527 823L525 835L532 834Z" fill="#2222ee" stroke="#007" stroke-width=".6"/>
      <path d="M512 858L521 859L518 866Q514 865 512 858Z" fill="#1b8f1b" stroke="#063" stroke-width=".6"/>
      <text class="axis" x="520" y="821" fill="#1414ff">Z</text>
      <text class="axis" x="504" y="862" fill="#2fcf28">Y</text>
      <text class="axis" x="600" y="867" fill="#ff1414">X</text>
    </svg>`;
  }

  private header() {
    return html`
      <header class="titlebar">
        <span class="logo">${i24(logo)}</span><span class="sep"></span>
        ${quickIcons.map(([l, a]) => this.btn(l, a))}
        <button class="drop" aria-label="Přizpůsobit">${box(9, 8, svg`<path d="M0 .5h9" stroke="#111"/><path d="M1 4h7l-3.500 4z" fill="#111"/>`)}</button>
        <button class="drop" aria-label="Sbalit nabídku">${box(8, 14, svg`<path d="M8 0v14L0 7z" fill="#1f9be0"/>`)}</button>
        <nav class="menu" aria-label="Hlavní nabídka">${menuItems.map((m) => html`<a href="#">${m}</a>`)}</nav>
        <span class="apptitle">ZW3D 2025 x64 - [* Díl002</span>
      </header>
      <nav class="tabs" aria-label="Karty">
        <button class="tab file">Soubor</button>
        ${tabs.map((t) => html`<button class=${classMap({ tab: true, on: t === "Přímá editace" })}>${t}</button>`)}
      </nav>
      <section class="ribbon">
        ${groups.map((gr) => html`<div class="group">
          <div class="cmds">${gr.cmds.map((c) => html`
            <button class="cmd ${c.size ?? ""} ${c.hot ? "hot" : ""}">
              ${box(40, 40, ribbonIcons[c.icon])}<span>${c.lines.map((l, i) => (i ? html`<br>${l}` : l))}</span>
            </button>`)}</div>
          <div class="caption">${gr.label}</div>
        </div>`)}
      </section>`;
  }

  private tools() {
    return html`<div class="tools" role="toolbar" aria-label="Výběr">
      <span class="grip"></span>
      ${this.btn("Režim výběru", T.pick, "lit")}
      ${this.btn("Přidat", T.plus)}${this.btn("Odebrat", T.minus)}${this.btn("Výběr oknem", T.frame)}
      ${this.drop("Další výběry")}
      ${this.btn("Polygon", T.hex)}<span class="sep"></span>
      ${this.btn("Filtr", T.filter)}
      <span class="combo"><select aria-label="Filtr entit"><option>Povrch</option></select>${box(7, 4, caret)}</span>
      ${this.btn("Filtr plochy", T.face, "lit")}
      <span class="combo off"><select aria-label="Rozsah" disabled><option>Pouze díl</option></select>${box(7, 4, caret)}</span>
      ${this.btn("Reference", T.ref1)}${this.btn("Zachytit referenci", T.ref2)}<span class="sep"></span>
      ${["l1", "l2", "l3", "l4", "arrow2", "rows", "layers", "globe", "plate"].map((k, i) => this.btn(`Nástroj výběru ${i + 1}`, T[k]))}
      <span class="sep"></span>
      ${["target", "links", "square"].map((k, i) => this.btn(`Řetěz ${i + 1}`, T[k]))}
      <span class="combo narrow"><select aria-label="Typ řetězce"><option>Samostatná plocha</option></select>${box(7, 4, caret)}</span>
      ${grey.map((a, i) => this.btn(`Uchopení ${i + 1}`, a))}
    </div>`;
  }

  private spin() {
    return html`<span class="spin">
      <button aria-label="Zvýšit">${box(5, 3, svg`<path d="M0 3h5L2.500 0z" fill="#333"/>`)}</button>
      <button aria-label="Snížit">${box(5, 3, svg`<path d="M0 0h5L2.500 3z" fill="#333"/>`)}</button></span>`;
  }
  private mini(label: string, w: number, h: number, art: Frag) {
    return html`<button class="mini" aria-label=${label}>${box(w, h, art)}</button>`;
  }

  private left() {
    const down = svg`<path d="M0 1h11L5.500 11z" fill="#4e545c"/>`;
    return html`<aside class="left">
      <div class="lefthead"><h2>Posun DE</h2>
        <button aria-label="Ukotvit">${box(13, 10, svg`<rect x=".5" y=".5" width="12" height="9" rx="1" fill="#f6f6f6" stroke="#8c8c8c"/><rect x="3.500" y="3.500" width="6" height="3" fill="none" stroke="#8c8c8c"/>`)}</button>
        <button aria-label="Zavřít">${box(15, 12, svg`<path d="M1 .5h4l2.500 3l2.500-3h4v2L10.500 6l3.500 3.500v2h-4l-2.500-3l-2.500 3H1v-2L4.500 6L1 2.500z" fill="#fff" stroke="#8c8c8c"/>`)}</button>
      </div>
      <div class="leftbody">
        <nav class="side" aria-label="Správci">${sideIcons.map(([l, a], i) => html`<button class=${i ? "" : "on"} aria-label=${l}>${box(32, 34, a)}</button>`)}</nav>
        <div class="panel">
          <div class="acts">
            <button aria-label="OK">${box(21, 18, svg`<path d="M1 9l4-3l4 5l8-10l3 3L9 17z" fill="#3cc51d" stroke="#1d8a12"/>`)}</button>
            <button aria-label="Zrušit">${box(20, 20, svg`<path d="M1 3l3-3l6 6l6-6l3 3l-6 7l6 7l-3 3l-6-6l-6 6l-3-3l6-7z" fill="#e8262a" stroke="#9c1216"/>`)}</button>
            <button aria-label="Použít">${box(20, 20, svg`<path d="M13 3.500H2.500v14h14V11" fill="none" stroke="#e0262c" stroke-width="3"/><path d="M6 8l2-2l3 4l7-9l2 2L11 14z" fill="#29c51d" stroke="#158a12" stroke-width=".6"/>`)}</button>
            <button class="push">F</button>
            <button aria-label="Informace">${box(16, 16, svg`<circle cx="8" cy="8" r="7" fill="#1c4fb0" stroke="#b9c6dc" stroke-width="1.500"/><path d="M8 7v5M6 7h2M6 12h4" stroke="#fff" stroke-width="1.800"/><circle cx="8" cy="4" r="1.300" fill="#fff"/>`)}</button>
            <button class="thin" aria-label="Rozbalit">${box(11, 20, svg`<path d="M1.500 0v19M1 18.500h8" stroke="#1aa0c8" stroke-width="1.500"/><path d="M3 3l3 5l-3 5M6 3l4 5l-4 5" fill="none" stroke="#e8a05a" stroke-width="1.500"/>`)}</button>
          </div>
          <section class="sect">
            <h3><button aria-expanded="true">${box(11, 12, down)}Požadováno</button></h3>
            <div class="fields">
              <div class="modes">${modeIcons.map((m, i) => html`<button class=${i === this.mode ? "on" : ""} aria-label="Metoda ${i + 1}" @click=${() => (this.mode = i)}>${box(42, 42, m)}</button>`)}</div>
              <div class="rows">
                <div class="row"><label for="faces">Povrchy</label><input id="faces" class="field wide" .value=${"3 vybráno"}>
                  ${this.mini("Možnosti povrchů", 12, 14, chevrons)}${this.mini("Vybrat povrchy", 18, 18, redDown)}<span class="mark"></span></div>
                <div class="row"><label for="dir">Směr</label><input id="dir" class="field">
                  ${this.mini("Možnosti směru", 12, 14, chevrons)}
                  ${this.mini("Obrátit směr", 19, 18, svg`<path d="M1 15L7 6H4l8-5l-1 8l-2-2l-6 8z" fill="#2196bd"/><path d="M18 3l-6 9h3l-8 5l1-8l2 2l6-8z" fill="#d8141c"/>`)}
                  ${this.mini("Vybrat směr", 18, 18, redDown)}<button class="mini slim" aria-label="Další">${box(7, 4, caret)}</button></div>
                <div class="row"><label for="dist">Vzdálenost</label><span class="num"><input id="dist" .value=${"0"}><span>mm</span>${this.spin()}</span>
                  ${this.mini("Zadat vzdálenost", 18, 18, redDown)}<button class="mini slim" aria-label="Další">${box(7, 4, caret)}</button></div>
              </div>
            </div>
          </section>
          <section class="sect">
            <h3><button aria-expanded="true">${box(11, 12, down)}Orientace</button></h3>
            <div class="fields"><div class="row tall">
              <label class="check"><input type="checkbox" .checked=${this.angle} @change=${(e: Event) => (this.angle = (e.target as HTMLInputElement).checked)}>
                ${this.angle ? html`<svg class="tick" width="12" height="12" viewBox="0 0 12 12" aria-hidden="true"><path d="M1 6l3 4l7-9" fill="none" stroke="#4a6480" stroke-width="2"/></svg>` : ""}Úhel</label>
              <span class="num"><input aria-label="Hodnota úhlu" .value=${"0"}><span>deg</span>${this.spin()}</span>
              ${this.mini("Zadat úhel", 18, 18, goldDown)}<button class="mini slim" aria-label="Další">${box(7, 4, caret)}</button>
            </div></div>
          </section>
          <section class="sect"><h3><button aria-expanded="false">${box(11, 12, svg`<path d="M1 0v12L10 6z" fill="#4e545c"/>`)}Nastavení</button></h3></section>
        </div>
      </div>
    </aside>`;
  }

  private right() {
    return html`<main class="right">
      <div class="docs">
        <div class="doc"><span>* Díl002.Z3PRT</span><button aria-label="Zavřít dokument">${box(13, 11, svg`<path d="M2 1l9 9M11 1L2 10" stroke="#7d6a45" stroke-width="2.500"/><path d="M0 1h4M9 1h4M0 10h4M9 10h4" stroke="#7d6a45" stroke-width="1.500"/>`)}</button></div>
        <button class="add" aria-label="Nový dokument">${box(13, 13, svg`<path d="M6.500 0v13M0 6.500h13" stroke="#a39d98" stroke-width="3"/>`)}</button>
        <button class="more" aria-label="Seznam dokumentů">${box(12, 10, svg`<path d="M0 1h12" stroke="#777" stroke-width="2"/><path d="M1 5h11l-5 5z" fill="#777"/>`)}</button>
      </div>
      <div class="canvas">
        ${this.scene()}
        <div class="viewbar" role="toolbar" aria-label="Zobrazení">
          ${this.btn("Konec", V.exit)}${this.btn("Pohledy", V.view)}${this.drop("Další pohledy")}
          ${this.btn("Guma", V.eraser)}${this.btn("Základna", V.datum)}
          ${this.btn("Stínovaný", V.shade)}${this.drop("Stínování")}
          ${this.btn("Drátový", V.wire)}${this.drop("Hrany")}
          ${this.btn("Síť", V.mesh)}${this.drop("Analýza")}
          ${this.btn("Přiblížit", V.zoomdoc)}${this.drop("Přiblížení")}
          ${this.btn("Střed", V.cross)}${this.drop("Otáčení")}
          ${this.btn("Okno", V.fit)}
          ${this.btn("Kóty", V.dim)}${this.drop("Měření")}
          ${this.btn("Monitor", V.monitor)}${this.drop("Displej")}
          ${this.btn("Barva čar", V.black)}${this.btn("Barva ploch", V.lightblue)}
          ${this.btn("Hladiny", V.stack)}${this.drop("Správa hladin")}
          <div class="layer">
            ${box(14, 18, svg`<path d="M7 2q4 0 4 5q0 2-2 4v3H5v-3Q3 9 3 7q0-5 4-5zM5.500 16h3" fill="#fff" stroke="#a2a2a2"/>`)}
            ${box(14, 16, svg`<circle cx="7" cy="8" r="6" fill="#ededed" stroke="#a2a2a2"/><path d="M2 13h2M10 13h2" stroke="#888"/>`)}
            <select aria-label="Hladina" disabled><option>Hladina000</option></select>
            <svg class="ic c" width="7" height="4" viewBox="0 0 7 4" aria-hidden="true">${caret}</svg>
          </div>
        </div>
        <div class="hints"><p>&lt;Ctrl-klik&gt; pro vyjmutí.</p><p>&lt;pravý-klik&gt; pro volby zadání entity.</p></div>
      </div>
    </main>`;
  }

  render() {
    return html`${this.defs()}${this.header()}${this.tools()}<div class="main">${this.left()}${this.right()}</div>`;
  }
}
